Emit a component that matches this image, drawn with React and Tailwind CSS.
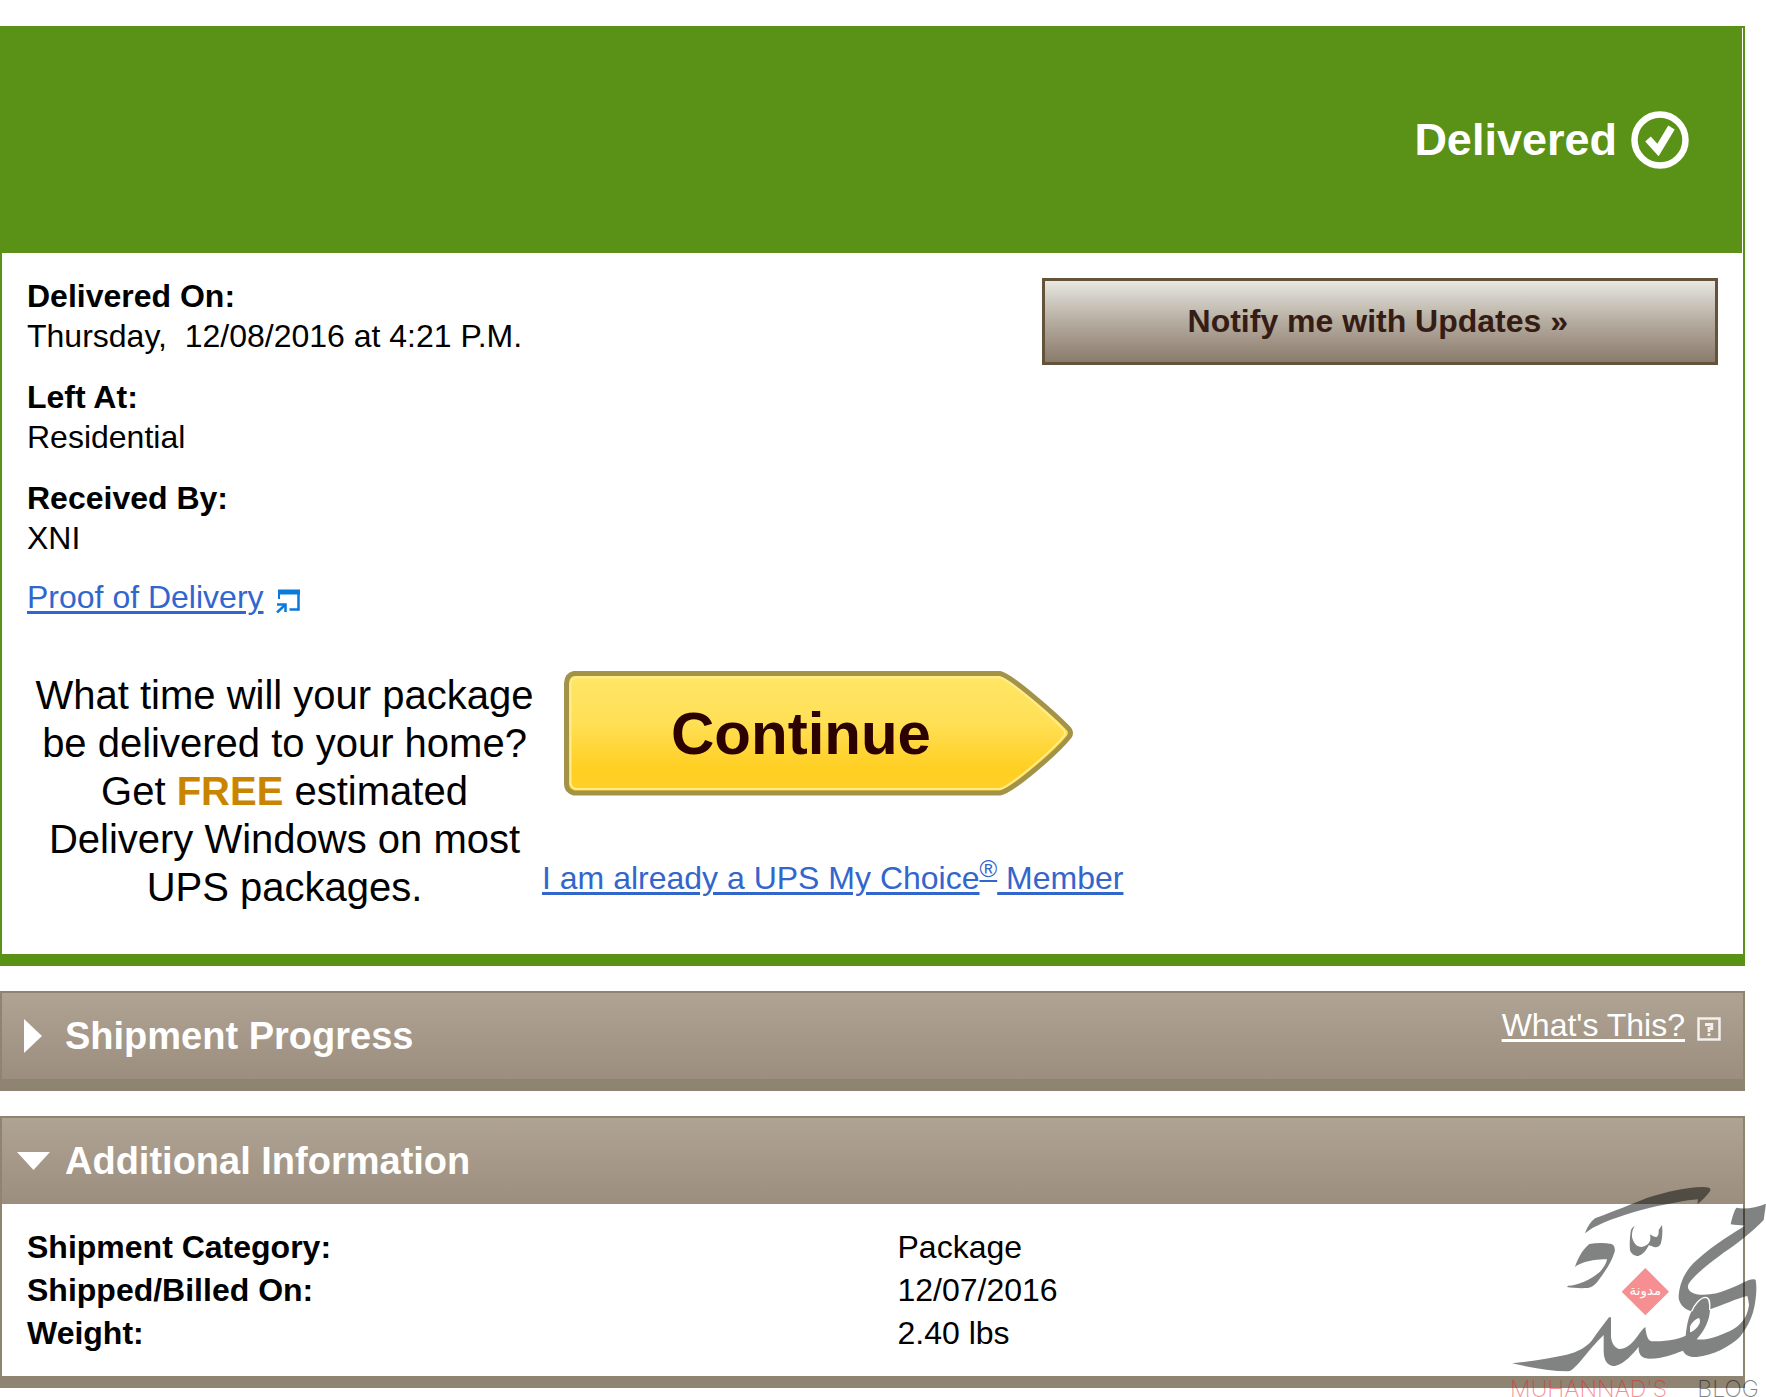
import React, { useState } from 'react';

const CheckBadge = () => (
    <svg viewBox="0 0 58 58" className="w-[58px] h-[58px]" fill="none" aria-hidden="true">
        <circle cx="29" cy="29" r="25.5" stroke="white" strokeWidth="6.5" />
        <path d="M17 28L27 39L40.5 16.5" stroke="white" strokeWidth="7.5" />
    </svg>
);

const PopupIcon = () => (
    <svg viewBox="0 0 24 24" className="w-6 h-6 mt-2" fill="none" stroke="#0b78dc" aria-hidden="true">
        <path d="M3 10V4" strokeWidth="2" />
        <path d="M2 3H24" strokeWidth="5" />
        <path d="M22.5 3V20.5H13.5" strokeWidth="2.5" />
        <path d="M1 15.500H9.500V23" strokeWidth="2.5" />
        <path d="M9 16L1 23.500" strokeWidth="2.5" />
    </svg>
);

const HelpIcon = () => (
    <svg viewBox="0 0 24 24" className="w-6 h-6 mt-2" fill="none" stroke="#f3f0ed" aria-hidden="true">
        <rect x="1.5" y="1.5" width="21" height="21" strokeWidth="2.5" />
        <path d="M8 7.5H14.8V11.5H12V15" strokeWidth="2.8" />
        <path d="M12 16.2V19" strokeWidth="2.8" />
    </svg>
);

const Arrow = ({ open }) => (
    <svg viewBox="0 0 34 34" className="w-[34px] h-[34px]" fill="white" aria-hidden="true">
        {open ? <path d="M0 8H33L16.5 26Z" /> : <path d="M7 0L25 17L7 34Z" />}
    </svg>
);

const Section = ({ title, open, onToggle, extra, children }) => (
    <section className="border-2 border-b-12 border-[#8f8372]">
        <div className="flex items-start justify-between h-[86px] bg-linear-to-b from-[#afa393] to-[#9c8e7e] text-white">
            <h2 className="h-full">
                <button
                    type="button"
                    aria-expanded={open}
                    onClick={onToggle}
                    className="flex items-center gap-[14px] h-full pl-[15px] text-[38px] font-bold"
                >
                    <Arrow open={open} />
                    {title}
                </button>
            </h2>
            {extra}
        </div>
        {open && children}
    </section>
);

const Detail = ({ label, value }) => (
    <div className="mb-[21px]">
        <dt className="font-bold">{label}</dt>
        <dd className="whitespace-pre">{value}</dd>
    </div>
);

const ContinueButton = () => (
    <button type="button" className="grid w-[510px] h-[125px] text-[60px] font-bold text-[#2b0200]">
        <svg viewBox="0 0 510 125" className="col-start-1 row-start-1 w-full h-full" aria-hidden="true">
            <defs>
                <linearGradient id="gold" x1="0" y1="0" x2="0" y2="1">
                    <stop offset="0" stopColor="#ffe666" />
                    <stop offset="0.4" stopColor="#ffe057" />
                    <stop offset="0.8" stopColor="#ffcf22" />
                    <stop offset="1" stopColor="#ffd02a" />
                </linearGradient>
            </defs>
            <path
                d="M10 2.5H436C446 4 492 44 505 58Q508 62 505 66C492 82 448 120 436 122H10Q2.5 120 2.5 113V12Q3 4 10 2.5Z"
                fill="url(#gold)"
                stroke="#a39349"
                strokeWidth="5"
            />
            <path
                d="M12 6.5H436C446 9 488 46 500 59Q502 62 500 65C488 80 447 115 436 118H12Q6.5 117 6.5 111V13Q7 8 12 6.5Z"
                fill="none"
                stroke="#ffec8a"
                strokeWidth="2"
            />
        </svg>
        <span className="col-start-1 row-start-1 self-center pr-9">Continue</span>
    </button>
);

const BlogLogo = () => (
    <svg viewBox="0 0 798 681" className="absolute right-0 bottom-0 w-[266px] h-[227px] opacity-50 pointer-events-none" fill="#060a08">
        <path d="M255 190C262 170 272 155 285 145C340 125 400 100 440 84C500 65 560 52 605 51C620 50 628 53 631 56V62C622 75 610 88 592 103L594 88C560 90 500 103 450 113C380 130 320 152 285 170C275 175 265 182 255 190Z" />
        <path d="M404 168C396 180 395 195 397 205C402 222 412 231 424 231C435 230 446 222 450 213C452 205 451 196 450 193C458 198 464 202 470 201C477 196 476 186 476 180L486 165C488 180 488 205 482 222C476 232 466 235 455 228L446 226C440 240 428 255 415 258C402 258 392 250 390 240C388 215 391 190 393 180C396 174 400 170 404 168Z" />
        <path d="M225 291C232 270 245 240 268 222C290 218 315 218 335 222C343 226 346 235 344 245C335 275 315 305 296 330C288 343 275 353 262 354C240 355 215 354 201 351L204 347C235 346 270 330 300 305C315 290 320 275 321 268C295 268 262 272 240 282C234 284 229 287 225 291Z" />
        <path d="M709 113C735 119 770 112 798 101L791 150C770 172 745 195 700 228C650 262 600 300 572 333C562 345 560 355 572 365C590 377 620 376 650 370C690 358 725 340 745 331C755 327 765 327 767 330C770 345 770 370 765 400C760 435 745 470 720 500C690 530 640 555 590 561C570 562 555 556 549 542C520 552 490 566 450 566C425 566 415 555 416 530C400 550 375 580 345 588C325 588 312 575 311 545V495C290 515 265 545 240 575C225 592 215 602 205 604C150 604 90 592 36 580C90 575 150 565 200 554C235 545 260 530 275 512C290 490 310 465 327 442H333V500C335 520 345 535 360 537C385 535 400 515 415 495C422 485 430 475 436 471C438 490 442 512 455 514C490 514 530 510 557 497C560 470 565 440 575 424C555 420 540 405 536 385C536 350 550 310 580 280C620 240 680 200 735 167C720 165 705 165 692 163C697 140 703 122 709 113ZM630 418C629 450 615 480 590 508C620 512 650 500 690 483C720 468 742 445 747 405C746 395 744 385 742 378C710 385 670 405 630 418ZM570 487C580 485 592 475 599 460C601 452 600 447 597 444C585 447 575 458 570 470Z" fillRule="evenodd" />
        <path d="M575 424C583 405 600 382 618 382C630 384 630 400 629 420" fill="none" stroke="white" strokeWidth="4" />
        <path d="M436 294L507 365L436 436L365 365Z" fill="#ed2126" />
        <text x="436" y="374" textAnchor="middle" fontSize="40" fill="white" className="font-['DejaVu_Sans',sans-serif]">مدونة</text>
        <text x="30" y="681" fontSize="69" fill="#ed2126" className="font-[Inter,sans-serif] font-extralight">MUHANNAD'S</text>
        <text x="592" y="681" fontSize="69" className="font-[Inter,sans-serif] font-extralight">BLOG</text>
    </svg>
);

const shipment = [
    ['Shipment Category:', 'Package'],
    ['Shipped/Billed On:', '12/07/2016'],
    ['Weight:', '2.40 lbs'],
];

const linkStyle = 'underline decoration-3 underline-offset-3 text-[#3366cc]';

const App = () => {
    const [progressOpen, setProgressOpen] = useState(false);
    const [infoOpen, setInfoOpen] = useState(true);

    return (
        <div className="relative min-h-screen bg-white pt-[26px] pb-[9px] pr-[21px] overflow-hidden font-['Liberation_Sans',Arial,sans-serif] text-[32px] leading-10 text-black">
            <main className="flex flex-col gap-[25px]">
                <section className="border-2 border-b-12 border-[#5a9117]">
                    <header className="flex items-center justify-end gap-[14px] h-[225px] pr-[53px] pb-[2px] bg-[#5a9117] border-r border-white text-white">
                        <h1 className="text-[45px] font-bold">Delivered</h1>
                        <CheckBadge />
                    </header>

                    <div className="flex items-start justify-between px-[25px] pt-[23px]">
                        <div>
                            <dl>
                                <Detail label="Delivered On:" value="Thursday,  12/08/2016 at 4:21 P.M." />
                                <Detail label="Left At:" value="Residential" />
                                <Detail label="Received By:" value="XNI" />
                            </dl>
                            <p className="flex items-center gap-3 leading-9">
                                <a href="#proof" className={linkStyle}>Proof of Delivery</a>
                                <PopupIcon />
                            </p>
                        </div>
                        <button
                            type="button"
                            className="w-2/5 h-[87px] mt-0.5 pr-1 pb-[2px] border-3 border-[#63533b] bg-linear-to-b from-[#e8e8e1] via-[#b5aca0] to-[#8b7c6c] font-bold text-[#351c15]"
                        >
                            Notify me with Updates »
                        </button>
                    </div>

                    <div className="flex items-start px-[25px] pt-14 pb-[43px]">
                        <p className="w-[515px] text-center text-[40px] leading-12">
                            What time will your package be delivered to your home? Get{' '}
                            <strong className="text-[#c98500]">FREE</strong> estimated Delivery Windows on most UPS packages.
                        </p>
                        <div>
                            <div className="pl-[22px] pb-[62px]">
                                <ContinueButton />
                            </div>
                            <a href="#member" className={linkStyle}>
                                I am already a UPS My Choice<sup className="inline-block text-2xl leading-none underline decoration-2">®</sup> Member
                            </a>
                        </div>
                    </div>
                </section>

                <Section
                    title="Shipment Progress"
                    open={progressOpen}
                    onToggle={() => setProgressOpen(!progressOpen)}
                    extra={
                        <p className="flex items-center gap-3 pt-3 pr-[22px]">
                            <a href="#help" className="underline decoration-3 underline-offset-3">What's This?</a>
                            <HelpIcon />
                        </p>
                    }
                />

                <Section title="Additional Information" open={infoOpen} onToggle={() => setInfoOpen(!infoOpen)}>
                    <div className="pt-[22px] pb-[21px]">
                        <table className="w-full leading-[43px]">
                            <tbody>
                                {shipment.map(([label, value]) => (
                                    <tr key={label}>
                                        <th scope="row" className="w-1/2 pl-[25px] text-left font-bold">{label}</th>
                                        <td className="pl-[25px]">{value}</td>
                                    </tr>
                                ))}
                            </tbody>
                        </table>
                    </div>
                </Section>
            </main>
            <BlogLogo />
        </div>
    );
};

export default App;
